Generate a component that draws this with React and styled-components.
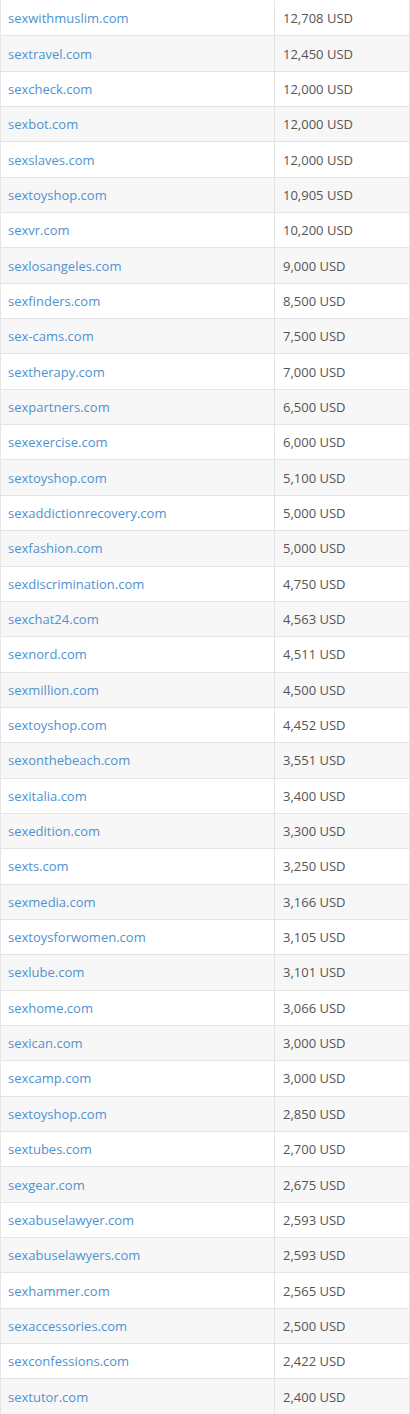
import styled, { createGlobalStyle } from 'styled-components';

const GlobalStyle = createGlobalStyle`
  html, body { margin: 0; padding: 0; background: #fff; }
  body { font-family: 'Open Sans', 'Noto Sans', sans-serif; }
`;

const dominios = [
  ['sexwithmuslim.com', '12,708'],
  ['sextravel.com', '12,450'],
  ['sexcheck.com', '12,000'],
  ['sexbot.com', '12,000'],
  ['sexslaves.com', '12,000'],
  ['sextoyshop.com', '10,905'],
  ['sexvr.com', '10,200'],
  ['sexlosangeles.com', '9,000'],
  ['sexfinders.com', '8,500'],
  ['sex-cams.com', '7,500'],
  ['sextherapy.com', '7,000'],
  ['sexpartners.com', '6,500'],
  ['sexexercise.com', '6,000'],
  ['sextoyshop.com', '5,100'],
  ['sexaddictionrecovery.com', '5,000'],
  ['sexfashion.com', '5,000'],
  ['sexdiscrimination.com', '4,750'],
  ['sexchat24.com', '4,563'],
  ['sexnord.com', '4,511'],
  ['sexmillion.com', '4,500'],
  ['sextoyshop.com', '4,452'],
  ['sexonthebeach.com', '3,551'],
  ['sexitalia.com', '3,400'],
  ['sexedition.com', '3,300'],
  ['sexts.com', '3,250'],
  ['sexmedia.com', '3,166'],
  ['sextoysforwomen.com', '3,105'],
  ['sexlube.com', '3,101'],
  ['sexhome.com', '3,066'],
  ['sexican.com', '3,000'],
  ['sexcamp.com', '3,000'],
  ['sextoyshop.com', '2,850'],
  ['sextubes.com', '2,700'],
  ['sexgear.com', '2,675'],
  ['sexabuselawyer.com', '2,593'],
  ['sexabuselawyers.com', '2,593'],
  ['sexhammer.com', '2,565'],
  ['sexaccessories.com', '2,500'],
  ['sexconfessions.com', '2,422'],
  ['sextutor.com', '2,400'],
];

function App() {
  return (
    <>
      <GlobalStyle />
      <Tabela>
        {dominios.map(([nome, preco], i) => (
          <Linha key={`${nome}-${i}`} $par={i % 2 === 1}>
            <Celula>
              <Link href="#">{nome}</Link>
            </Celula>
            <Celula $preco>{preco} USD</Celula>
          </Linha>
        ))}
      </Tabela>
    </>
  );
}
export default App;

const Tabela = styled.div`
  width: 410px;
  box-sizing: border-box;
  padding-top: 1px;
  border-left: 1px solid #e6e6e6;
  border-right: 1px solid #e6e6e6;
`;

const Linha = styled.div`
  display: grid;
  grid-template-columns: 273px 1fr;
  height: 35.35px;
  box-sizing: border-box;
  border-bottom: 1px solid #e4e4e4;
  background: ${(p) => (p.$par ? '#f7f7f7' : '#ffffff')};
`;

const Celula = styled.div`
  display: flex;
  align-items: center;
  padding-left: ${(p) => (p.$preco ? '8px' : '7px')};
  font-size: 13px;
  color: #555555;
  border-left: ${(p) => (p.$preco ? '1px solid #e4e4e4' : 'none')};
  white-space: nowrap;
`;

const Link = styled.a`
  color: #5092cf;
  text-decoration: none;
`;
